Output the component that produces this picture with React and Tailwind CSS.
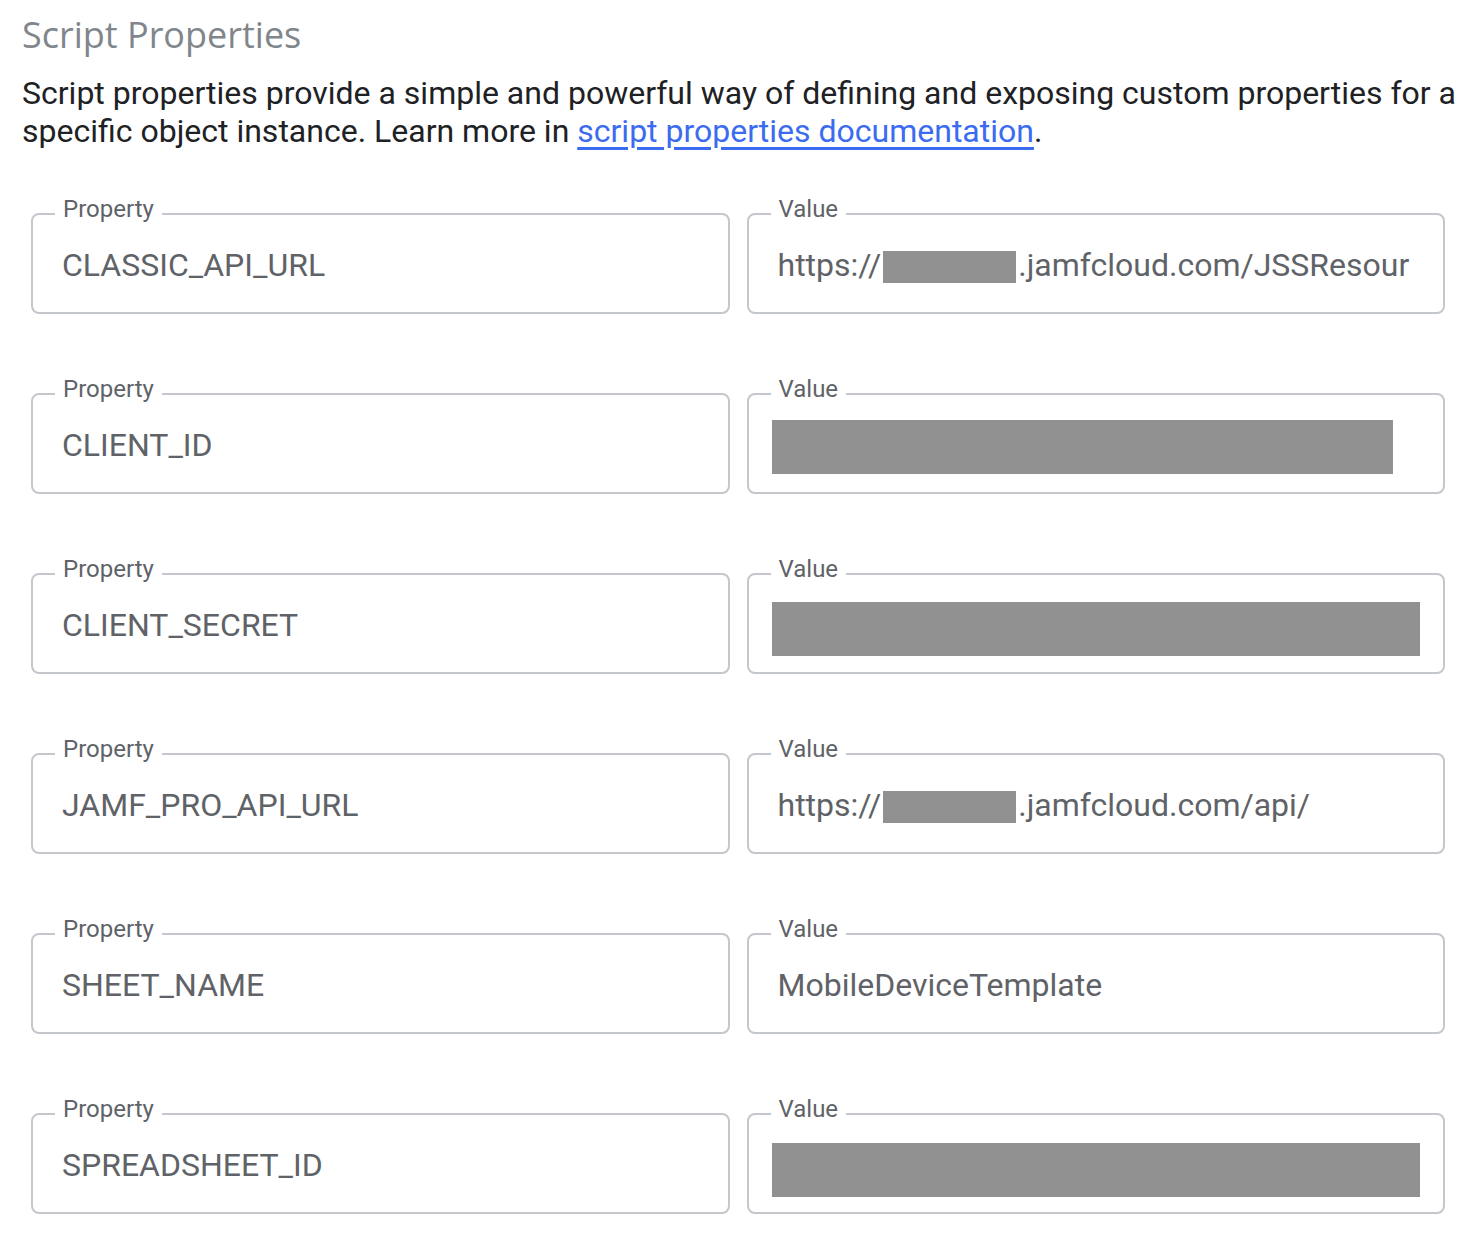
import React from 'react';

const rows = [
  { name: 'CLASSIC_API_URL', value: { kind: 'url', suffix: '.jamfcloud.com/JSSResour' } },
  { name: 'CLIENT_ID', value: { kind: 'block', cls: 'w-[621px] translate-y-[2px]' } },
  { name: 'CLIENT_SECRET', value: { kind: 'block', cls: 'w-[648px] translate-y-[4px]' } },
  { name: 'JAMF_PRO_API_URL', value: { kind: 'url', suffix: '.jamfcloud.com/api/' } },
  { name: 'SHEET_NAME', value: { kind: 'text', text: 'MobileDeviceTemplate' } },
  { name: 'SPREADSHEET_ID', value: { kind: 'block', cls: 'w-[648px] translate-y-[5px]' } },
];

function Field({ label, children }) {
  // fieldset + legend gives the notched outline of a Material outlined input
  return (
    <fieldset className="h-[117px] min-w-0 rounded-[8px] border-2 border-[#c4c7cb] px-[23px] pt-0 pb-[13px] m-0 flex items-center">
      <legend className="ml-[-1px] px-[8px] pb-[10px] text-[24px] leading-[24px] text-[#5f6368]">{label}</legend>
      {children}
    </fieldset>
  );
}

function Text({ children }) {
  return (
    <div className="w-full px-[6px] overflow-hidden whitespace-nowrap text-[32px] leading-[40px] text-[#5f6368]">
      {children}
    </div>
  );
}

function Value({ value }) {
  if (value.kind === 'url') {
    return (
      <Text>
        <span className="flex items-center">
          https://
          <span className="inline-block shrink-0 h-[32px] w-[133px] bg-[#919191] mx-[2px] translate-y-[2px]" />
          {value.suffix}
        </span>
      </Text>
    );
  }
  if (value.kind === 'block') {
    return <div className={`h-[54px] shrink-0 bg-[#919191] ${value.cls}`} />;
  }
  return <Text>{value.text}</Text>;
}

export default function App() {
  return (
    <div className="min-h-[1246px] w-[1468px] bg-white px-[22px] pt-[12px] font-['Roboto',sans-serif]">
      <h1 className="font-['Open_Sans',sans-serif] text-[36px] leading-[46px] text-[#80868b]">Script Properties</h1>
      <p className="mt-[16px] text-[32px] leading-[38px] text-[#202124] whitespace-nowrap">
        Script properties provide a simple and powerful way of defining and exposing custom properties for a
        <br />
        specific object instance. Learn more in{' '}
        <a href="#" className="text-[#3b6bf0] underline underline-offset-[5px]">script properties documentation</a>.
      </p>

      <div className="mt-[47px] ml-[9px] mr-[1px] grid grid-cols-2 gap-x-[17px] gap-y-[63px]">
        {rows.map((r) => (
          <React.Fragment key={r.name}>
            <Field label="Property">
              <Text>{r.name}</Text>
            </Field>
            <Field label="Value">
              <Value value={r.value} />
            </Field>
          </React.Fragment>
        ))}
      </div>
    </div>
  );
}
